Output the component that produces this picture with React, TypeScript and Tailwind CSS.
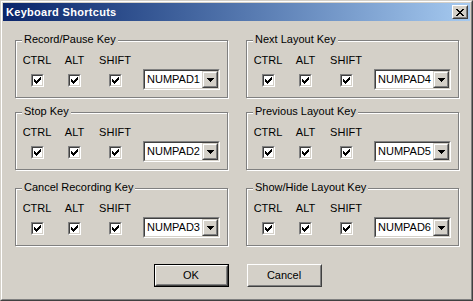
import React from "react";

const FONT = { fontFamily: '"Liberation Sans", Arial, sans-serif' };

function Check() {
  return (
    <svg width="7" height="7" viewBox="0 0 7 7" shapeRendering="crispEdges">
      <rect x="6" y="0" width="1" height="3" fill="#000" />
      <rect x="5" y="1" width="1" height="3" fill="#000" />
      <rect x="4" y="2" width="1" height="3" fill="#000" />
      <rect x="3" y="3" width="1" height="3" fill="#000" />
      <rect x="2" y="4" width="1" height="3" fill="#000" />
      <rect x="1" y="3" width="1" height="3" fill="#000" />
      <rect x="0" y="2" width="1" height="3" fill="#000" />
    </svg>
  );
}

function Checkbox() {
  return (
    <div className="w-[13px] h-[13px] border border-t-[#808080] border-l-[#808080] border-r-white border-b-white">
      <div className="w-full h-full border border-t-[#404040] border-l-[#404040] border-r-[#d4d0c8] border-b-[#d4d0c8] bg-white flex items-center justify-center">
        <Check />
      </div>
    </div>
  );
}

function Combo({ value }: { value: string }) {
  return (
    <div className="w-[77px] h-[21px] border border-t-[#808080] border-l-[#808080] border-r-white border-b-white">
      <div className="w-full h-full border border-t-[#404040] border-l-[#404040] border-r-[#d4d0c8] border-b-[#d4d0c8] bg-white flex items-center">
        <span className="flex-1 pl-[2px] text-[11px] leading-[13px] text-black">{value}</span>
        <div className="w-[16px] h-[17px] border border-t-[#d4d0c8] border-l-[#d4d0c8] border-r-[#404040] border-b-[#404040]">
          <div className="w-full h-full border border-t-white border-l-white border-r-[#808080] border-b-[#808080] bg-[#d4d0c8] flex items-center justify-center">
            <svg width="7" height="4" viewBox="0 0 7 4" shapeRendering="crispEdges">
              <rect x="0" y="0" width="7" height="1" fill="#000" />
              <rect x="1" y="1" width="5" height="1" fill="#000" />
              <rect x="2" y="2" width="3" height="1" fill="#000" />
              <rect x="3" y="3" width="1" height="1" fill="#000" />
            </svg>
          </div>
        </div>
      </div>
    </div>
  );
}

function Group({ title, combo }: { title: string; combo: string }) {
  return (
    <div className="relative w-[213px] h-[58px] border border-[#808080] shadow-[inset_1px_1px_0_#fff,1px_1px_0_#fff]">
      <span className="absolute left-[6px] top-[-8px] px-[2px] bg-[#d4d0c8] text-[11px] leading-[13px] text-black whitespace-nowrap">
        {title}
      </span>
      <div className="flex items-start pt-[13px] pl-[6px]">
        <div className="w-[30px] flex flex-col items-center gap-[7px]">
          <span className="text-[11px] leading-[13px] text-black">CTRL</span>
          <Checkbox />
        </div>
        <div className="w-[45px] flex flex-col items-center gap-[7px]">
          <span className="text-[11px] leading-[13px] text-black">ALT</span>
          <Checkbox />
        </div>
        <div className="w-[36px] flex flex-col items-center gap-[7px]">
          <span className="text-[11px] leading-[13px] text-black">SHIFT</span>
          <Checkbox />
        </div>
        <div className="ml-[10px] mt-[15px]">
          <Combo value={combo} />
        </div>
      </div>
    </div>
  );
}

function Button({ label, isDefault }: { label: string; isDefault?: boolean }) {
  if (isDefault) {
    return (
      <div className="w-[75px] h-[23px] border border-black">
        <div className="w-full h-full border border-t-white border-l-white border-r-[#404040] border-b-[#404040]">
          <div className="w-full h-full border border-t-[#d4d0c8] border-l-[#d4d0c8] border-r-[#808080] border-b-[#808080] flex items-center justify-center text-[11px] leading-[13px] text-black">
            {label}
          </div>
        </div>
      </div>
    );
  }
  return (
    <div className="w-[75px] h-[23px] border border-t-white border-l-white border-r-[#404040] border-b-[#404040]">
      <div className="w-full h-full border border-t-[#d4d0c8] border-l-[#d4d0c8] border-r-[#808080] border-b-[#808080] flex items-center justify-center text-[11px] leading-[13px] text-black">
        {label}
      </div>
    </div>
  );
}

export default function App() {
  return (
    <div style={FONT} className="w-[473px] h-[301px] border border-t-[#d4d0c8] border-l-[#d4d0c8] border-r-[#404040] border-b-[#404040] bg-[#d4d0c8]">
      <div className="w-full h-full border border-t-white border-l-white border-r-[#808080] border-b-[#808080] p-[1px] flex flex-col">
        <div className="h-[18px] flex items-center justify-between pl-[3px] pr-[2px] bg-gradient-to-r from-[#0a246a] to-[#a6caf0]">
          <span className="text-white font-bold text-[11px] leading-[13px] tracking-[0.3px]">Keyboard Shortcuts</span>
          <div className="w-[16px] h-[14px] border border-t-white border-l-white border-r-[#404040] border-b-[#404040]">
            <div className="w-full h-full border border-t-[#d4d0c8] border-l-[#d4d0c8] border-r-[#808080] border-b-[#808080] bg-[#d4d0c8] flex items-center justify-center">
              <svg width="8" height="7" viewBox="0 0 8 7" shapeRendering="crispEdges">
                <rect x="0" y="0" width="2" height="1" fill="#000" />
                <rect x="6" y="0" width="2" height="1" fill="#000" />
                <rect x="1" y="1" width="2" height="1" fill="#000" />
                <rect x="5" y="1" width="2" height="1" fill="#000" />
                <rect x="2" y="2" width="4" height="1" fill="#000" />
                <rect x="3" y="3" width="2" height="1" fill="#000" />
                <rect x="2" y="4" width="4" height="1" fill="#000" />
                <rect x="1" y="5" width="2" height="1" fill="#000" />
                <rect x="5" y="5" width="2" height="1" fill="#000" />
                <rect x="0" y="6" width="2" height="1" fill="#000" />
                <rect x="6" y="6" width="2" height="1" fill="#000" />
              </svg>
            </div>
          </div>
        </div>
        <div className="pl-[12px] pt-[19px] flex gap-[18px]">
          <div className="flex flex-col">
            <Group title="Record/Pause Key" combo="NUMPAD1" />
            <div className="mt-[14px]">
              <Group title="Stop Key" combo="NUMPAD2" />
            </div>
            <div className="mt-[18px]">
              <Group title="Cancel Recording Key" combo="NUMPAD3" />
            </div>
          </div>
          <div className="flex flex-col">
            <Group title="Next Layout Key" combo="NUMPAD4" />
            <div className="mt-[14px]">
              <Group title="Previous Layout Key" combo="NUMPAD5" />
            </div>
            <div className="mt-[18px]">
              <Group title="Show/Hide Layout Key" combo="NUMPAD6" />
            </div>
          </div>
        </div>
        <div className="flex justify-center gap-[18px] mt-[18px] pl-[2px]">
          <Button label="OK" isDefault />
          <Button label="Cancel" />
        </div>
      </div>
    </div>
  );
}
